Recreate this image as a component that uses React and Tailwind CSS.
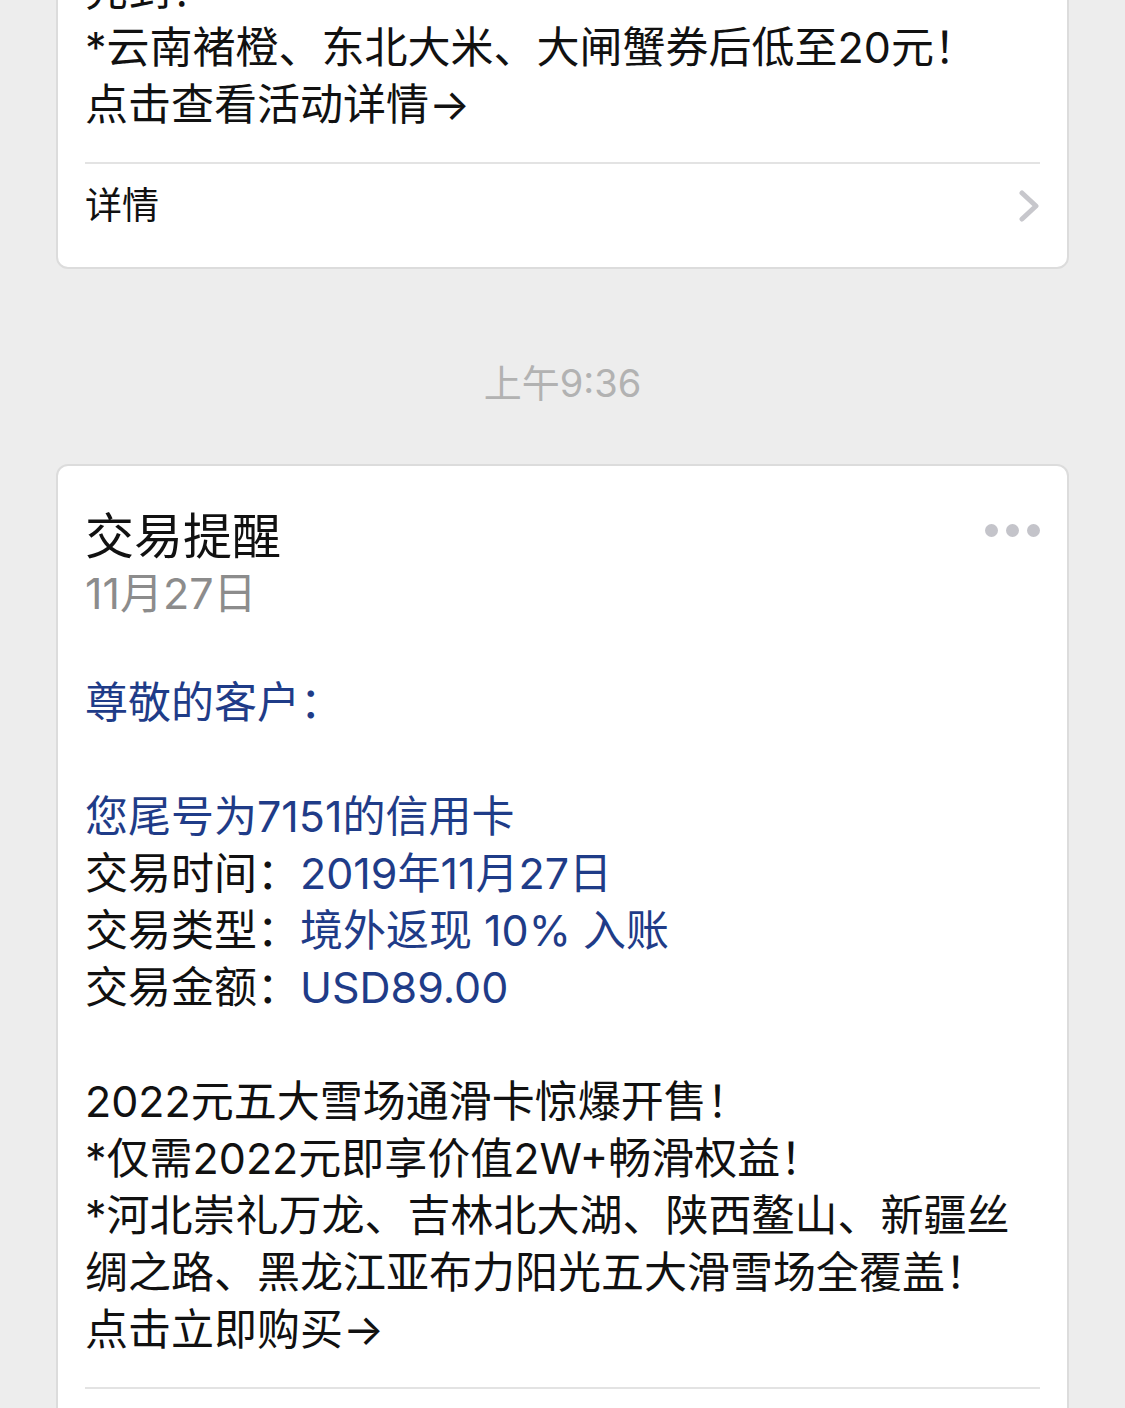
import React from 'react';

const font = { fontFamily: 'Inter, "Noto Sans CJK SC", sans-serif' };

const Divider = () => <div className="h-[2px] bg-[#e3e3e3]" />;

const Chevron = () => (
  <svg width="22" height="32" viewBox="0 0 22 32" fill="none">
    <polyline points="4,3 18,16 4,29" stroke="#c7c7cc" strokeWidth="5" strokeLinecap="round" strokeLinejoin="round" />
  </svg>
);

const Dots = () => (
  <div className="flex gap-[8px] mt-[15px]">
    <span className="w-[13px] h-[13px] rounded-full bg-[#c4c4ca]" />
    <span className="w-[13px] h-[13px] rounded-full bg-[#c4c4ca]" />
    <span className="w-[13px] h-[13px] rounded-full bg-[#c4c4ca]" />
  </div>
);

const Row = ({ label, value }) => (
  <p>
    <span className="text-[#111]">{label}</span>
    <span className="text-[#1f3c88]">{value}</span>
  </p>
);

export default function App() {
  return (
    <div className="w-[1125px] h-[1408px] overflow-hidden bg-[#ededed]" style={font}>
      {/* previous message, cut off at the top */}
      <div className="ml-[56px] w-[1013px] -mt-[70px] bg-white border-2 border-[#dcdcdc] rounded-[12px]">
        <div className="px-[27px] pt-[30px] text-[43px] leading-[57px] text-[#111]">
          <p>先到！</p>
          <p>*云南褚橙、东北大米、大闸蟹券后低至20元！</p>
          <p>点击查看活动详情→</p>
        </div>
        <div className="px-[27px] mt-[29px]">
          <Divider />
          <div className="flex items-center justify-between h-[84px] mb-[19px]">
            <span className="text-[37px] text-[#111]">详情</span>
            <Chevron />
          </div>
        </div>
      </div>

      <div className="mt-[92px] mb-[59px] text-center text-[38px] leading-[44px] text-[#b2b2b2]">
        上午9:36
      </div>

      <div className="ml-[56px] w-[1013px] bg-white border-2 border-[#dcdcdc] rounded-[12px]">
        <div className="px-[27px] pt-[43px]">
          <div className="flex justify-between items-start">
            <h1 className="text-[49px] leading-[56px] text-[#111]">交易提醒</h1>
            <Dots />
          </div>
          <p className="text-[43px] leading-[56px] text-[#8c8c8c]">11月27日</p>

          <div className="mt-[53px] text-[43px] leading-[57px]">
            <p className="text-[#1f3c88]">尊敬的客户：</p>
            <p>&nbsp;</p>
            <p className="text-[#1f3c88]">您尾号为7151的信用卡</p>
            <Row label="交易时间：" value="2019年11月27日" />
            <Row label="交易类型：" value="境外返现 10% 入账" />
            <Row label="交易金额：" value="USD89.00" />
            <p>&nbsp;</p>
            <div className="text-[#111]">
              <p>2022元五大雪场通滑卡惊爆开售！</p>
              <p>*仅需2022元即享价值2W+畅滑权益！</p>
              <p>*河北崇礼万龙、吉林北大湖、陕西鳌山、新疆丝</p>
              <p>绸之路、黑龙江亚布力阳光五大滑雪场全覆盖！</p>
              <p>点击立即购买→</p>
            </div>
          </div>

          <div className="mt-[29px]">
            <Divider />
            <div className="flex items-center justify-between h-[84px] mb-[19px]">
              <span className="text-[37px] text-[#111]">详情</span>
              <Chevron />
            </div>
          </div>
        </div>
      </div>
    </div>
  );
}
